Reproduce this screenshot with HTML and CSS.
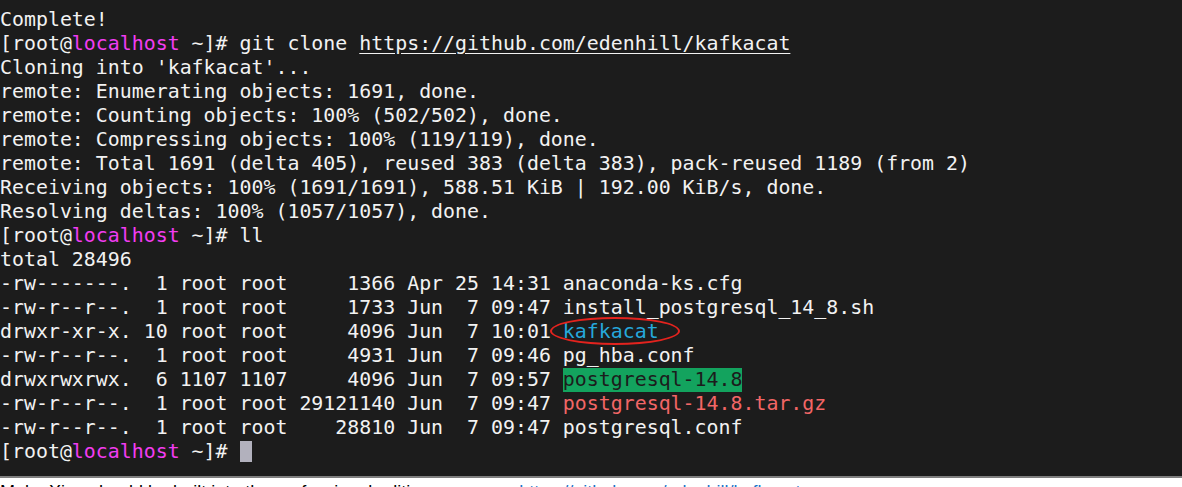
FILE: index.html
```html
<!DOCTYPE html>
<html>
<head>
<meta charset="utf-8">
<link rel="stylesheet" href="styles.css">
</head>
<body>
<div class="term">
<div class="line">Complete!</div>
<div class="line">[root@<span class="host">localhost</span> ~]# git clone <span class="url">https://github.com/edenhill/kafkacat</span></div>
<div class="line">Cloning into 'kafkacat'...</div>
<div class="line">remote: Enumerating objects: 1691, done.</div>
<div class="line">remote: Counting objects: 100% (502/502), done.</div>
<div class="line">remote: Compressing objects: 100% (119/119), done.</div>
<div class="line">remote: Total 1691 (delta 405), reused 383 (delta 383), pack-reused 1189 (from 2)</div>
<div class="line">Receiving objects: 100% (1691/1691), 588.51 KiB | 192.00 KiB/s, done.</div>
<div class="line">Resolving deltas: 100% (1057/1057), done.</div>
<div class="line">[root@<span class="host">localhost</span> ~]# ll</div>
<div class="line">total 28496</div>
<div class="line">-rw-------.  1 root root     1366 Apr 25 14:31 anaconda-ks.cfg</div>
<div class="line">-rw-r--r--.  1 root root     1733 Jun  7 09:47 install_postgresql_14_8.sh</div>
<div class="line">drwxr-xr-x. 10 root root     4096 Jun  7 10:01 <span class="dir">kafkacat</span></div>
<div class="line">-rw-r--r--.  1 root root     4931 Jun  7 09:46 pg_hba.conf</div>
<div class="line">drwxrwxrwx.  6 1107 1107     4096 Jun  7 09:57 <span class="ow">postgresql-14.8</span></div>
<div class="line">-rw-r--r--.  1 root root 29121140 Jun  7 09:47 <span class="arc">postgresql-14.8.tar.gz</span></div>
<div class="line">-rw-r--r--.  1 root root    28810 Jun  7 09:47 postgresql.conf</div>
<div class="line">[root@<span class="host">localhost</span> ~]#<span class="cursor"></span></div>
<div class="mark"></div>
</div>
<div class="sep"></div>
<div class="below"><span class="txt">Make Xian should be built into the professional edition, see</span><span class="link">https://github.com/edenhill/kafkacat</span></div>
</body>
</html>
```
FILE: styles.css
```css
html, body {
  margin: 0;
  padding: 0;
  background: #ffffff;
}
.term {
  position: relative;
  box-sizing: border-box;
  height: 476px;
  padding-top: 8px;
  background: #1c1c1c;
  color: #f2f2f2;
  font-family: "DejaVu Sans Mono", monospace;
  font-size: 19.9px;
  overflow: hidden;
}
.line {
  height: 24px;
  line-height: 24px;
  white-space: pre;
}
.host { color: #f23cf2; }
.url { text-decoration: underline; text-underline-offset: 3px; }
.dir { color: #26a8dc; }
.ow {
  display: inline-block;
  height: 24px;
  background: #13a35e;
  color: #1c1c1c;
}
.arc { color: #f26666; }
.cursor {
  display: inline-block;
  width: 12px;
  height: 21px;
  margin-left: 12px;
  vertical-align: -4px;
  background: #b2b1bd;
}
.mark {
  position: absolute;
  left: 550px;
  top: 317px;
  width: 126px;
  height: 24px;
  border: 2px solid #e3231e;
  border-radius: 50%;
}
.sep {
  height: 2px;
  background: #7f7f7f;
}
.below {
  height: 9px;
  overflow: hidden;
  padding-top: 5px;
  box-sizing: border-box;
  white-space: nowrap;
  font-family: "Liberation Sans", Arial, sans-serif;
  font-size: 18px;
  line-height: 18px;
  color: #000;
}
.link { color: #1a73c8; margin-left: 50px; }
```
